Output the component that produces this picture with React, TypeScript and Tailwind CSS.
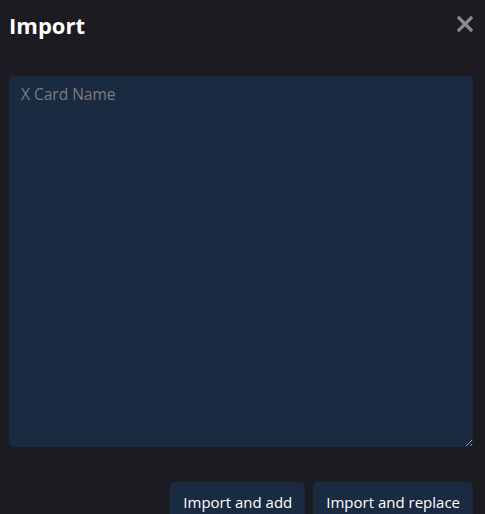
export default function App() {
    return (
        <div className="h-[514px] w-[485px] overflow-hidden bg-[#1c1b22] pr-[12px] pl-[9px] font-['Open_Sans',sans-serif] text-white">
            <div className="flex h-[76px] items-start justify-between pt-[8px]">
                <h1 className="text-[22px] font-bold leading-[34px]">Import</h1>
                <button className="mt-[8px] text-[#8a8a8e]" aria-label="Close">
                    <svg width="16" height="16" viewBox="0 0 16 16">
                        <path
                            d="M2 2 L14 14 M14 2 L2 14"
                            stroke="currentColor"
                            strokeWidth="3.2"
                            strokeLinecap="square"
                        />
                    </svg>
                </button>
            </div>
            <textarea
                placeholder="X Card Name"
                className="block h-[371px] w-full rounded-[5px] bg-[#1a2a40] px-3 py-[7px] text-[15.5px] text-white outline-none placeholder:text-[#7c7c80]"
            ></textarea>
            <div className="mt-[35px] flex justify-end gap-2">
                <button className="h-[40px] rounded-[5px] bg-[#1a2a40] px-[13px] text-[15px] leading-[40px] text-white">
                    Import and add
                </button>
                <button className="h-[40px] rounded-[5px] bg-[#1a2a40] px-[13px] text-[15px] leading-[40px] text-white">
                    Import and replace
                </button>
            </div>
        </div>
    );
}
